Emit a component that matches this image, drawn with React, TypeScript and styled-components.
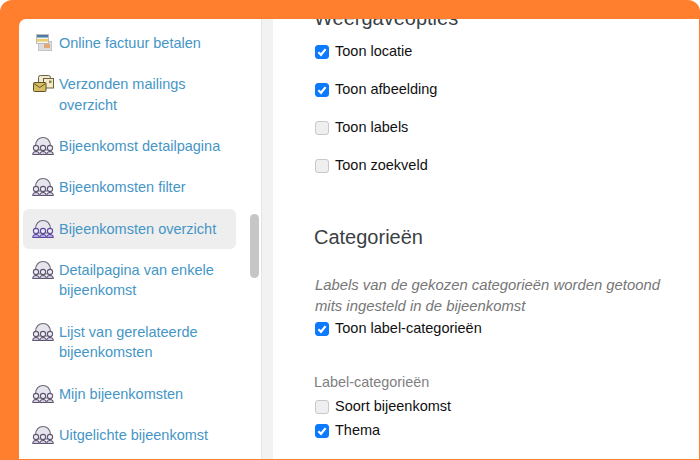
import styled, { createGlobalStyle } from "styled-components";

const GlobalStyle = createGlobalStyle`
  html, body {
    margin: 0;
    padding: 0;
    background: #fff;
  }
  body {
    font-family: "Liberation Sans", Arial, sans-serif;
    -webkit-font-smoothing: antialiased;
  }
`;

const Frame = styled.div`
  width: 700px;
  height: 460px;
  box-sizing: border-box;
  padding: 19px 1px 1px 19px;
  background: #ff7f2e;
  border-radius: 12px 12px 0 0;
  overflow: hidden;
`;

const Window = styled.div`
  display: flex;
  height: 100%;
  background: #fff;
  border-radius: 7px 0 0 0;
  overflow: hidden;
`;

const Sidebar = styled.nav`
  position: relative;
  flex: none;
  width: 243px;
  box-sizing: border-box;
  padding: 4px 0 0 4px;
  border-right: 1px solid #e4e4e4;
`;

const Item = styled.a<{ $active?: boolean }>`
  display: flex;
  align-items: flex-start;
  width: 213px;
  box-sizing: border-box;
  padding: 10px 8px;
  margin-bottom: 0.8px;
  border-radius: 6px;
  background: ${(p) => (p.$active ? "#eeeeee" : "transparent")};
  color: #4596c6;
  font-size: 14.5px;
  line-height: 20.5px;
`;

const ItemIcon = styled.span`
  flex: none;
  width: 22px;
  height: 20px;
  margin-left: 1px;
  margin-right: 5px;
`;

const Scrollbar = styled.div`
  position: absolute;
  top: 195px;
  left: 231px;
  width: 9px;
  height: 64px;
  border-radius: 5px;
  background: #c6c6c6;
`;

const Gutter = styled.div`
  flex: none;
  width: 11px;
  background: #f2f2f2;
`;

const Content = styled.main`
  flex: 1;
  min-width: 0;
  padding-left: 42px;
  color: #111;
  overflow: hidden;
`;

const Heading = styled.h2<{ $clipped?: boolean }>`
  margin: ${(p) => (p.$clipped ? "-13px" : "51px")} 0 0 -1px;
  font-size: 20px;
  line-height: 24px;
  font-weight: 400;
  color: #3b3f44;
`;

const OptionList = styled.div`
  display: flex;
  flex-direction: column;
  gap: 21px;
  margin-top: 13px;
`;

const TightList = styled.div`
  display: flex;
  flex-direction: column;
  gap: 7px;
  margin-top: 7px;
`;

const Option = styled.label`
  display: flex;
  align-items: center;
  gap: 6px;
  font-size: 14.5px;
  line-height: 17px;
`;

const Box = styled.span<{ $checked?: boolean }>`
  flex: none;
  display: flex;
  align-items: center;
  justify-content: center;
  width: 14px;
  height: 14px;
  box-sizing: border-box;
  border-radius: 3px;
  background: ${(p) => (p.$checked ? "#0b7aff" : "#efefef")};
  border: 1px solid ${(p) => (p.$checked ? "#0b7aff" : "#c8c8c8")};
`;

const Note = styled.p`
  margin: 26px 0 0;
  font-size: 14.85px;
  line-height: 21px;
  font-style: italic;
  color: #767676;
`;

const SubLabel = styled.div`
  margin: 37px 0 0 -1px;
  font-size: 14.4px;
  line-height: 17px;
  color: #808080;
`;

const NoteOption = styled.div`
  margin-top: 3px;
`;

const Check = ({ checked }: { checked?: boolean }) => (
  <Box $checked={checked}>
    {checked ? (
      <svg width="10" height="10" viewBox="0 0 10 10">
        <path d="M1.4 5.3 4 7.800 8.600 2.100" fill="none" stroke="#fff" strokeWidth="2.200" />
      </svg>
    ) : null}
  </Box>
);

const InvoiceIcon = () => (
  <svg width="22" height="20" viewBox="0 0 22 20">
    <rect x="6.500" y="8.500" width="13" height="9" fill="#dcdcdc" stroke="#c6c6c6" />
    <rect x="12" y="11" width="6" height="4" fill="#e3a878" />
    <rect x="4.500" y="1.500" width="12" height="9" fill="#f3f3ee" stroke="#bcbcbc" />
    <rect x="5" y="2" width="11" height="2.500" fill="#4f7aa6" />
    <rect x="5" y="6" width="11" height="2.500" fill="#eccb6a" />
  </svg>
);

const MailIcon = () => (
  <svg width="22" height="20" viewBox="0 0 22 20">
    <rect x="6.500" y="1.500" width="12" height="9" rx="2" fill="#f2ead0" stroke="#6b6140" />
    <rect x="11.500" y="4.500" width="10" height="9.500" fill="#f3ecc9" stroke="#6b6140" />
    <rect x="17" y="6.500" width="2.500" height="2.500" fill="#8a8058" />
    <rect x="1.500" y="8.500" width="12.500" height="9" rx="1" fill="#d9bd62" stroke="#5f5228" />
    <path d="M2 9.500 7.700 13.500 13.500 9.500" fill="none" stroke="#5f5228" />
  </svg>
);

const GroupIcon = ({ active }: { active?: boolean }) => {
  const fill = active ? "#b9abee" : "#d5cfe4";
  const line = active ? "#5b4a9a" : "#5f5670";
  return (
    <svg width="22" height="20" viewBox="0 0 22 20">
      <path d="M3.500 10C3.500 4.500 7 1.500 11 1.500S18.500 4.500 18.500 10V14H3.500Z" fill="#e6e4ec" stroke="#6f6878" strokeWidth="1.200" />
      {[4, 11, 18].map((x) => (
        <g key={x}>
          <path d={`M${x - 3.200} 18.500C${x - 3.200} 14.500 ${x + 3.200} 14.500 ${x + 3.200} 18.500Z`} fill={fill} stroke={line} strokeWidth="1.100" />
          <circle cx={x} cy="12" r="2.600" fill="#efedf5" stroke={line} strokeWidth="1.100" />
        </g>
      ))}
    </svg>
  );
};

const items = [
  { label: "Online factuur betalen", icon: <InvoiceIcon /> },
  { label: "Verzonden mailings overzicht", icon: <MailIcon /> },
  { label: "Bijeenkomst detailpagina", icon: <GroupIcon /> },
  { label: "Bijeenkomsten filter", icon: <GroupIcon /> },
  { label: "Bijeenkomsten overzicht", icon: <GroupIcon active />, active: true },
  { label: "Detailpagina van enkele bijeenkomst", icon: <GroupIcon /> },
  { label: "Lijst van gerelateerde bijeenkomsten", icon: <GroupIcon /> },
  { label: "Mijn bijeenkomsten", icon: <GroupIcon /> },
  { label: "Uitgelichte bijeenkomst", icon: <GroupIcon /> },
];

export default function App() {
  return (
    <Frame>
      <GlobalStyle />
      <Window>
        <Sidebar>
          {items.map((item) => (
            <Item key={item.label} $active={item.active}>
              <ItemIcon>{item.icon}</ItemIcon>
              <span>{item.label}</span>
            </Item>
          ))}
          <Scrollbar />
        </Sidebar>
        <Gutter />
        <Content>
          <Heading $clipped>Weergaveopties</Heading>
          <OptionList>
            <Option><Check checked />Toon locatie</Option>
            <Option><Check checked />Toon afbeelding</Option>
            <Option><Check />Toon labels</Option>
            <Option><Check />Toon zoekveld</Option>
          </OptionList>
          <Heading>Categorieën</Heading>
          <Note>
            Labels van de gekozen categorieën worden getoond
            <br />
            mits ingesteld in de bijeenkomst
          </Note>
          <NoteOption>
            <Option><Check checked />Toon label-categorieën</Option>
          </NoteOption>
          <SubLabel>Label-categorieën</SubLabel>
          <TightList>
            <Option><Check />Soort bijeenkomst</Option>
            <Option><Check checked />Thema</Option>
          </TightList>
        </Content>
      </Window>
    </Frame>
  );
}
